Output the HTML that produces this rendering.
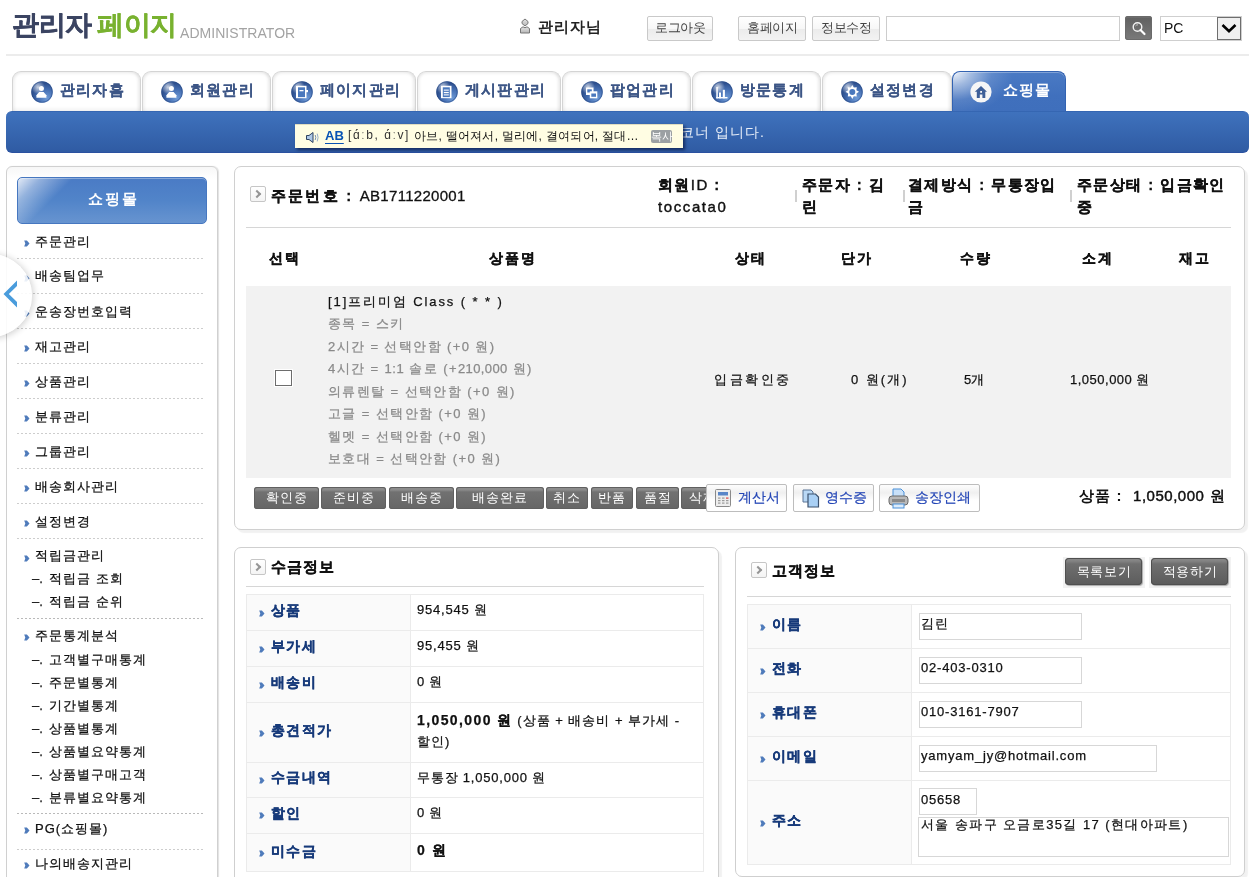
<!DOCTYPE html>
<html><head><meta charset="utf-8">
<style>
*{box-sizing:border-box;margin:0;padding:0}
html,body{width:1253px;height:877px;overflow:hidden;background:#fff}
body{position:relative;font-family:"Liberation Sans",sans-serif;font-size:13px;color:#222}
.abs{position:absolute}
/* header */
#logo1{left:12px;top:7px;font-size:27px;font-weight:bold;color:#3b4462;-webkit-text-stroke:0.4px #3b4462;letter-spacing:-0.5px;white-space:nowrap}
#logo2{left:97px;top:7px;font-size:27px;font-weight:bold;color:#79b230;-webkit-text-stroke:0.3px #79b230;letter-spacing:-0.5px;white-space:nowrap}
#logo3{left:180px;top:25px;font-size:14px;color:#a3a3a3;white-space:nowrap;letter-spacing:0.05px}
#hline{left:6px;top:54px;width:1243px;height:2px;background:#ececec}
.hbtn{position:absolute;top:16px;height:25px;border:1px solid #c9c9c9;border-radius:2px;background:linear-gradient(#fff 0,#f7f7f7 50%,#ebebeb 51%,#f3f3f3 100%);font-size:13px;color:#444;text-align:center;line-height:22px;letter-spacing:-0.5px}
/* tabs */
.tab{position:absolute;top:71px;height:40px;border:1px solid #d4d4d4;border-bottom:none;border-radius:9px 9px 0 0;background:#fff;box-shadow:inset 0 3px 3px -1px rgba(0,0,0,.05),inset -3px 0 3px -1px rgba(0,0,0,.08),inset 3px 0 3px -1px rgba(0,0,0,.05),inset 0 -5px 4px -3px rgba(0,0,0,.06)}
.tab .ic2{position:absolute;left:18px;top:9px}
.tab .icx{position:absolute;left:18px;top:9px;width:22px;height:22px;border-radius:50%;background:radial-gradient(circle at 35% 30%,#c6d6ee 0,#6d93c9 25%,#3a63a6 60%,#2c4f8c 100%)}
.tab .tx{position:absolute;left:47px;top:9px;font-size:15px;font-weight:bold;color:#3d5686;-webkit-text-stroke:0.15px #3d5686;white-space:nowrap;letter-spacing:1.2px}
#bluebar{left:6px;top:111px;width:1243px;height:42px;border-radius:6px;background:linear-gradient(#3f72bd,#2f5ba3);border-top:1px solid #3566b2;border-bottom:1px solid #2a51a0}
/* boxes */
.box{position:absolute;border:1px solid #cfcfcf;border-radius:7px;background:#fff;box-shadow:3px 3px 1px rgba(0,0,0,.055)}
.sideitem{position:absolute;left:17px;width:188px;font-size:13px;color:#111;white-space:nowrap;letter-spacing:1px;margin-left:-1px}
.dash{position:absolute;left:17px;width:188px;height:1px;background:repeating-linear-gradient(90deg,#cdcdcd 0 2px,transparent 2px 4px)}
.bul{position:absolute;width:5px;height:6px}
.ibox{width:16px;height:16px;border:1px solid #c6c6c6;border-radius:2px;background:linear-gradient(#fff,#f4f4f4)}
.ibox:after{content:"";position:absolute;left:3px;top:4px;width:4px;height:4px;border-right:2.2px solid #959595;border-top:2.2px solid #959595;transform:rotate(45deg)}
.hd2{font-size:15px;font-weight:bold;color:#111;line-height:22px;letter-spacing:1.4px;white-space:nowrap;margin-left:-1px}
.sep{width:2px;height:12px;background:#d0d0d0}
.th1{top:249px;font-size:14px;font-weight:bold;color:#111;text-align:center;line-height:18px;letter-spacing:2px;text-indent:2px}
.td1{font-size:13px;color:#111;white-space:nowrap;line-height:16px;letter-spacing:1.5px}
.dbtn{position:absolute;top:487px;height:22px;border-radius:3px;background:linear-gradient(#8f8f8f 0,#8a8a8a 3px,#717171 5px,#666 100%);box-shadow:inset 0 0 0 1px #606060;color:#fff;font-size:13px;text-align:center;line-height:22px;letter-spacing:1px;white-space:nowrap}
.lbtn{position:absolute;top:484px;height:28px;border:1px solid #bdbdbd;border-radius:2px;background:linear-gradient(#fdfdfd,#f0f0f0 30%,#fff 60%,#fff);white-space:nowrap}
.lbtn span{position:absolute;top:4px;font-size:13.5px;color:#2446b6;-webkit-text-stroke:0.2px #2446b6}
.thb{font-size:14px;font-weight:bold;color:#173a7a;white-space:nowrap;line-height:18px;letter-spacing:1.3px}
.tdv{font-size:13px;color:#111;white-space:nowrap;line-height:16px;letter-spacing:0.8px}
.gbtn{position:absolute;top:558px;width:77px;height:27px;border-radius:4px;background:linear-gradient(#8a8a8a 0,#838383 3px,#6f6f6f 6px,#5c5c5c 100%);box-shadow:inset 0 0 0 1px #505050,1px 1px 1px rgba(0,0,0,.3);color:#fff;font-size:13px;text-align:center;line-height:27px;letter-spacing:0.6px;text-indent:1px}
.inp{position:absolute;height:27px;border:1px solid #d7d7d7;background:#fff;font-size:13px;color:#111;padding:1px 0 0 1px;white-space:nowrap;line-height:17px;letter-spacing:0.8px}
body{will-change:transform}
.sideitem,.td1,.tdv,.inp,.prod{-webkit-text-stroke:0.25px currentColor}
.hd2,.th1,.thb,.ttl{-webkit-text-stroke:0.3px currentColor}</style></head><body>
<!-- HEADER -->
<div id="logo1" class="abs">관리자</div>
<div id="logo2" class="abs">페이지</div>
<div id="logo3" class="abs">ADMINISTRATOR</div>
<div id="hline" class="abs"></div>
<!-- user icon -->
<svg class="abs" style="left:519px;top:18px" width="12" height="16" viewBox="0 0 12 16">
 <defs><linearGradient id="ug" x1="0" y1="0" x2="0" y2="1"><stop offset="0" stop-color="#e6e6e6"/><stop offset="1" stop-color="#b5b5b5"/></linearGradient></defs>
 <path d="M6 1 L9 3.5 L9 5.5 L6 8 L3 5.5 L3 3.5 Z" fill="url(#ug)" stroke="#777" stroke-width="1"/>
 <path d="M1.5 15 L1.5 10.5 L4 8.8 L6 9.8 L8 8.8 L10.5 10.5 L10.5 15 Z" fill="url(#ug)" stroke="#777" stroke-width="1"/>
</svg>
<div class="abs" id="admname" style="left:538px;top:18px;font-size:15px;font-weight:bold;color:#222;letter-spacing:1px;white-space:nowrap">관리자님</div>
<div class="hbtn" style="left:647px;width:66px">로그아웃</div>
<div class="hbtn" style="left:738px;width:68px">홈페이지</div>
<div class="hbtn" style="left:812px;width:68px">정보수정</div>
<div class="abs" style="left:886px;top:16px;width:234px;height:25px;border:1px solid #cdcdcd;background:#fff"></div>
<div class="abs" style="left:1125px;top:16px;width:27px;height:24px;border-radius:3px;background:linear-gradient(#5f5f5f,#7a7a7a);box-shadow:inset 0 0 0 1px #6a6a6a, inset 0 2px 1px rgba(255,255,255,.08)">
 <svg width="27" height="24" viewBox="0 0 27 24" style="position:absolute;left:0;top:0"><circle cx="12.5" cy="11" r="4.3" fill="none" stroke="#f2f2f2" stroke-width="1.4"/><path d="M15.5 14 L19.5 18" stroke="#fff" stroke-width="2.2" stroke-linecap="round"/><path d="M10.5 10 Q11.5 8.6 13 8.8" stroke="#ddd" stroke-width="0.8" fill="none"/></svg>
</div>
<div class="abs" style="left:1160px;top:16px;width:82px;height:25px;border:1px solid #cfcfcf;background:#fff">
 <div class="abs" style="left:3px;top:3px;font-size:14px;color:#111">PC</div>
 <div class="abs" style="left:56px;top:0px;width:24px;height:23px;border:1px solid #6e6e6e;background:#efefef">
  <svg width="22" height="21" viewBox="0 0 22 21" style="position:absolute;left:0;top:0"><path d="M4.5 7 L11 13.2 L17.5 7" fill="none" stroke="#000" stroke-width="2.6"/></svg>
 </div>
</div>
<svg width="0" height="0" style="position:absolute"><defs>
<radialGradient id="sph" cx="0.72" cy="0.78" r="0.85"><stop offset="0" stop-color="#6e9ad6"/><stop offset="0.45" stop-color="#4670b4"/><stop offset="0.8" stop-color="#2f5190"/><stop offset="1" stop-color="#3b5f9e"/></radialGradient>
<radialGradient id="hl" cx="0.32" cy="0.28" r="0.32"><stop offset="0" stop-color="#fff" stop-opacity=".75"/><stop offset="1" stop-color="#fff" stop-opacity="0"/></radialGradient>
</defs></svg>
<!-- TABS -->
<div class="tab" style="left:12px;width:129px"><svg class="ic2" width="22" height="22" viewBox="0 0 22 22"><circle cx="11" cy="11" r="10.8" fill="url(#sph)"/><circle cx="11" cy="11" r="10.8" fill="url(#hl)"/><circle cx="11" cy="11" r="10.3" fill="none" stroke="#24437a" stroke-opacity=".45" stroke-width="1"/><circle cx="10.4" cy="7.6" r="2.5" fill="#fff"/><path d="M8.2 11 L12.6 11 L15.4 14.2 L15.4 16.8 L5.4 16.8 L5.4 14.2 Z" fill="#fff"/></svg><div class="tx">관리자홈</div></div>
<div class="tab" style="left:142px;width:129px"><svg class="ic2" width="22" height="22" viewBox="0 0 22 22"><circle cx="11" cy="11" r="10.8" fill="url(#sph)"/><circle cx="11" cy="11" r="10.8" fill="url(#hl)"/><circle cx="11" cy="11" r="10.3" fill="none" stroke="#24437a" stroke-opacity=".45" stroke-width="1"/><circle cx="10.4" cy="7.6" r="2.5" fill="#fff"/><path d="M8.2 11 L12.6 11 L15.4 14.2 L15.4 16.8 L5.4 16.8 L5.4 14.2 Z" fill="#fff"/></svg><div class="tx">회원관리</div></div>
<div class="tab" style="left:272px;width:144px"><svg class="ic2" width="22" height="22" viewBox="0 0 22 22"><circle cx="11" cy="11" r="10.8" fill="url(#sph)"/><circle cx="11" cy="11" r="10.8" fill="url(#hl)"/><circle cx="11" cy="11" r="10.3" fill="none" stroke="#24437a" stroke-opacity=".45" stroke-width="1"/><rect x="5" y="4.8" width="10.5" height="12.4" fill="#fff"/><rect x="7" y="6.3" width="7" height="9.8" fill="#4a78bd"/><rect x="8.5" y="9" width="4" height="1.3" fill="#fff"/><rect x="15" y="9" width="2" height="2.2" fill="#fff"/></svg><div class="tx">페이지관리</div></div>
<div class="tab" style="left:417px;width:144px"><svg class="ic2" width="22" height="22" viewBox="0 0 22 22"><circle cx="11" cy="11" r="10.8" fill="url(#sph)"/><circle cx="11" cy="11" r="10.8" fill="url(#hl)"/><circle cx="11" cy="11" r="10.3" fill="none" stroke="#24437a" stroke-opacity=".45" stroke-width="1"/><rect x="5" y="4.8" width="10.5" height="12.4" fill="#fff"/><rect x="6.8" y="6.3" width="7" height="9.8" fill="#4a78bd"/><rect x="7.8" y="8.5" width="5" height="1.3" fill="#dfe8f5"/><rect x="7.8" y="10.9" width="5" height="1.3" fill="#fff"/><rect x="7.8" y="13.2" width="5" height="1.3" fill="#dfe8f5"/></svg><div class="tx">게시판관리</div></div>
<div class="tab" style="left:562px;width:129px"><svg class="ic2" width="22" height="22" viewBox="0 0 22 22"><circle cx="11" cy="11" r="10.8" fill="url(#sph)"/><circle cx="11" cy="11" r="10.8" fill="url(#hl)"/><circle cx="11" cy="11" r="10.3" fill="none" stroke="#24437a" stroke-opacity=".45" stroke-width="1"/><rect x="5" y="6.5" width="7.5" height="7.5" fill="#fff"/><rect x="6.3" y="8.3" width="4.5" height="3.2" fill="#4a78bd"/><rect x="8.8" y="10.3" width="7.5" height="7" fill="#fff"/><rect x="10.3" y="12.5" width="4.7" height="3.3" fill="#4a78bd"/></svg><div class="tx">팝업관리</div></div>
<div class="tab" style="left:692px;width:129px"><svg class="ic2" width="22" height="22" viewBox="0 0 22 22"><circle cx="11" cy="11" r="10.8" fill="url(#sph)"/><circle cx="11" cy="11" r="10.8" fill="url(#hl)"/><circle cx="11" cy="11" r="10.3" fill="none" stroke="#24437a" stroke-opacity=".45" stroke-width="1"/><rect x="5.3" y="6" width="1.5" height="11.3" fill="#fff"/><rect x="8" y="11.5" width="2" height="5.8" fill="#fff"/><rect x="11.8" y="8.8" width="2.1" height="8.5" fill="#fff"/><rect x="5.3" y="16" width="11.2" height="1.4" fill="#fff"/></svg><div class="tx">방문통계</div></div>
<div class="tab" style="left:822px;width:130px"><svg class="ic2" width="22" height="22" viewBox="0 0 22 22"><circle cx="11" cy="11" r="10.8" fill="url(#sph)"/><circle cx="11" cy="11" r="10.8" fill="url(#hl)"/><circle cx="11" cy="11" r="10.3" fill="none" stroke="#24437a" stroke-opacity=".45" stroke-width="1"/><path d="M11.3 4 L12.8 6.6 L15.8 6.2 L15.4 9.2 L18 10.8 L15.4 12.6 L15.8 15.6 L12.8 15.2 L11.3 17.9 L9.8 15.2 L6.8 15.6 L7.2 12.6 L4.6 10.8 L7.2 9.2 L6.8 6.2 L9.8 6.6 Z" fill="#fff"/><circle cx="11.3" cy="10.9" r="3" fill="#4a78bd"/></svg><div class="tx">설정변경</div></div>
<div class="abs" id="acttab" style="left:952px;top:71px;width:114px;height:41px;border-radius:8px 8px 0 0;background:radial-gradient(ellipse 60px 44px at 0 0,rgba(255,255,255,.92) 0,rgba(255,255,255,.5) 30%,rgba(255,255,255,.12) 65%,rgba(255,255,255,0) 100%),linear-gradient(#4a7ac4,#4070bd 60%,#3f6fbc);border:1px solid #3363b2;border-bottom:none;box-shadow:inset 0 1px 0 rgba(255,255,255,.3)">
 <svg class="abs" style="left:17px;top:9px" width="22" height="22" viewBox="0 0 22 22"><circle cx="11" cy="11" r="10.6" fill="#f6f6f6"/><path d="M11 5 L17 10.8 L15.3 10.8 L15.3 17 L12.4 17 L12.4 13.5 L9.8 13.5 L9.8 17 L6.8 17 L6.8 10.8 L4.8 10.8 Z" fill="#3e5f98"/><rect x="10.2" y="10" width="1.8" height="1.8" fill="#f6f6f6"/></svg>
 <div class="abs" style="left:50px;top:9px;font-size:15px;font-weight:bold;color:#fff;white-space:nowrap;letter-spacing:1px">쇼핑몰</div>
</div>
<div id="bluebar" class="abs"></div>
<div class="abs" style="left:680px;top:124px;font-size:14px;color:#eaf0f9;white-space:nowrap;letter-spacing:1px">코너 입니다.</div>
<!-- tooltip -->
<div class="abs" id="tip" style="left:295px;top:124px;width:388px;height:24px;background:#fffde3;box-shadow:2px 2px 3px rgba(0,10,50,.6);border-top:1px solid #e0ddc0">
 <svg class="abs" style="left:11px;top:7px" width="14" height="11" viewBox="0 0 14 11"><path d="M0.5 3.5 L3 3.5 L7 0.5 L7 10.5 L3 7.5 L0.5 7.5 Z" fill="#aec8e8" stroke="#2e4260" stroke-width="1"/><path d="M9.2 3 Q10.4 5.5 9.2 8" fill="none" stroke="#6a86b0" stroke-width="0.9"/><path d="M11.2 1.6 Q13 5.5 11.2 9.4" fill="none" stroke="#8aa4c8" stroke-width="0.9"/></svg>
 <div class="abs" style="left:30px;top:3px;font-size:13px;font-weight:bold;color:#0752b4;text-decoration:underline;text-underline-offset:3px;white-space:nowrap">AB</div>
 <div class="abs" style="left:53px;top:3px;font-size:12px;color:#333;white-space:nowrap;letter-spacing:1.6px">[ɑ́ːb, ɑ́ːv]</div>
 <div class="abs" style="left:119px;top:3px;font-size:12px;color:#111;white-space:nowrap;letter-spacing:0.25px">아브, 떨어져서, 멀리에, 결여되어, 절대…</div>
 <div class="abs" style="left:356px;top:5px;width:21px;height:13px;border-radius:2px;background:#9ba0a3;color:#fff;font-size:11px;line-height:13px;text-align:center;letter-spacing:-0.5px">복사</div>
</div>
<!-- SIDEBAR -->
<div class="box" style="left:6px;top:166px;width:212px;height:730px;border-radius:6px;border-color:#d0d0d0;box-shadow:1px 0 1px rgba(0,0,0,.12);background:linear-gradient(#f7f7f7,#fff 12px)"></div>
<div class="abs" style="left:17px;top:177px;width:190px;height:47px;border-radius:5px;border:1px solid #4677c0;background:linear-gradient(135deg,rgba(255,255,255,.85) 0,rgba(255,255,255,.4) 10%,rgba(255,255,255,0) 24%),linear-gradient(#4a7bc5 0,#5184c9 50%,#6794d0 100%);box-shadow:inset 0 1px 0 rgba(255,255,255,.35)">
 <div class="abs" style="left:0;top:12px;width:188px;text-align:center;font-size:15px;font-weight:bold;color:#fff;letter-spacing:2px;text-indent:2px">쇼핑몰</div>
</div>
<svg class="abs" style="left:24px;top:240px" width="6" height="7" viewBox="0 0 6 7"><path d="M0.2 0.4 L2.9 0.4 L5.5 3.5 L2.9 6.6 L0.2 6.6 L1.3 3.5 Z" fill="#4f7bbb"/></svg>
<div class="sideitem" style="left:36px;top:234px;line-height:16px">주문관리</div>
<svg class="abs" style="left:24px;top:275px" width="6" height="7" viewBox="0 0 6 7"><path d="M0.2 0.4 L2.9 0.4 L5.5 3.5 L2.9 6.6 L0.2 6.6 L1.3 3.5 Z" fill="#4f7bbb"/></svg>
<div class="sideitem" style="left:36px;top:268px;line-height:16px">배송팀업무</div>
<svg class="abs" style="left:24px;top:310px" width="6" height="7" viewBox="0 0 6 7"><path d="M0.2 0.4 L2.9 0.4 L5.5 3.5 L2.9 6.6 L0.2 6.6 L1.3 3.5 Z" fill="#4f7bbb"/></svg>
<div class="sideitem" style="left:36px;top:304px;line-height:16px">운송장번호입력</div>
<svg class="abs" style="left:24px;top:345px" width="6" height="7" viewBox="0 0 6 7"><path d="M0.2 0.4 L2.9 0.4 L5.5 3.5 L2.9 6.6 L0.2 6.6 L1.3 3.5 Z" fill="#4f7bbb"/></svg>
<div class="sideitem" style="left:36px;top:339px;line-height:16px">재고관리</div>
<svg class="abs" style="left:24px;top:380px" width="6" height="7" viewBox="0 0 6 7"><path d="M0.2 0.4 L2.9 0.4 L5.5 3.5 L2.9 6.6 L0.2 6.6 L1.3 3.5 Z" fill="#4f7bbb"/></svg>
<div class="sideitem" style="left:36px;top:374px;line-height:16px">상품관리</div>
<svg class="abs" style="left:24px;top:415px" width="6" height="7" viewBox="0 0 6 7"><path d="M0.2 0.4 L2.9 0.4 L5.5 3.5 L2.9 6.6 L0.2 6.6 L1.3 3.5 Z" fill="#4f7bbb"/></svg>
<div class="sideitem" style="left:36px;top:409px;line-height:16px">분류관리</div>
<svg class="abs" style="left:24px;top:450px" width="6" height="7" viewBox="0 0 6 7"><path d="M0.2 0.4 L2.9 0.4 L5.5 3.5 L2.9 6.6 L0.2 6.6 L1.3 3.5 Z" fill="#4f7bbb"/></svg>
<div class="sideitem" style="left:36px;top:444px;line-height:16px">그룹관리</div>
<svg class="abs" style="left:24px;top:485px" width="6" height="7" viewBox="0 0 6 7"><path d="M0.2 0.4 L2.9 0.4 L5.5 3.5 L2.9 6.6 L0.2 6.6 L1.3 3.5 Z" fill="#4f7bbb"/></svg>
<div class="sideitem" style="left:36px;top:479px;line-height:16px">배송회사관리</div>
<svg class="abs" style="left:24px;top:520px" width="6" height="7" viewBox="0 0 6 7"><path d="M0.2 0.4 L2.9 0.4 L5.5 3.5 L2.9 6.6 L0.2 6.6 L1.3 3.5 Z" fill="#4f7bbb"/></svg>
<div class="sideitem" style="left:36px;top:514px;line-height:16px">설정변경</div>
<svg class="abs" style="left:24px;top:555px" width="6" height="7" viewBox="0 0 6 7"><path d="M0.2 0.4 L2.9 0.4 L5.5 3.5 L2.9 6.6 L0.2 6.6 L1.3 3.5 Z" fill="#4f7bbb"/></svg>
<div class="sideitem" style="left:36px;top:548px;line-height:16px">적립금관리</div>
<svg class="abs" style="left:24px;top:634px" width="6" height="7" viewBox="0 0 6 7"><path d="M0.2 0.4 L2.9 0.4 L5.5 3.5 L2.9 6.6 L0.2 6.6 L1.3 3.5 Z" fill="#4f7bbb"/></svg>
<div class="sideitem" style="left:36px;top:628px;line-height:16px">주문통계분석</div>
<svg class="abs" style="left:24px;top:827px" width="6" height="7" viewBox="0 0 6 7"><path d="M0.2 0.4 L2.9 0.4 L5.5 3.5 L2.9 6.6 L0.2 6.6 L1.3 3.5 Z" fill="#4f7bbb"/></svg>
<div class="sideitem" style="left:36px;top:821px;line-height:16px">PG(쇼핑몰)</div>
<svg class="abs" style="left:24px;top:862px" width="6" height="7" viewBox="0 0 6 7"><path d="M0.2 0.4 L2.9 0.4 L5.5 3.5 L2.9 6.6 L0.2 6.6 L1.3 3.5 Z" fill="#4f7bbb"/></svg>
<div class="sideitem" style="left:36px;top:856px;line-height:16px">나의배송지관리</div>
<div class="sideitem" style="left:33px;top:571px;line-height:16px"><span style="letter-spacing:0;margin-right:2px">&ndash;.</span>&nbsp;적립금 조회</div>
<div class="sideitem" style="left:33px;top:594px;line-height:16px"><span style="letter-spacing:0;margin-right:2px">&ndash;.</span>&nbsp;적립금 순위</div>
<div class="sideitem" style="left:33px;top:652px;line-height:16px"><span style="letter-spacing:0;margin-right:2px">&ndash;.</span>&nbsp;고객별구매통계</div>
<div class="sideitem" style="left:33px;top:675px;line-height:16px"><span style="letter-spacing:0;margin-right:2px">&ndash;.</span>&nbsp;주문별통계</div>
<div class="sideitem" style="left:33px;top:698px;line-height:16px"><span style="letter-spacing:0;margin-right:2px">&ndash;.</span>&nbsp;기간별통계</div>
<div class="sideitem" style="left:33px;top:721px;line-height:16px"><span style="letter-spacing:0;margin-right:2px">&ndash;.</span>&nbsp;상품별통계</div>
<div class="sideitem" style="left:33px;top:744px;line-height:16px"><span style="letter-spacing:0;margin-right:2px">&ndash;.</span>&nbsp;상품별요약통계</div>
<div class="sideitem" style="left:33px;top:767px;line-height:16px"><span style="letter-spacing:0;margin-right:2px">&ndash;.</span>&nbsp;상품별구매고객</div>
<div class="sideitem" style="left:33px;top:790px;line-height:16px"><span style="letter-spacing:0;margin-right:2px">&ndash;.</span>&nbsp;분류별요약통계</div>
<div class="dash" style="top:258px"></div>
<div class="dash" style="top:293px"></div>
<div class="dash" style="top:328px"></div>
<div class="dash" style="top:363px"></div>
<div class="dash" style="top:398px"></div>
<div class="dash" style="top:433px"></div>
<div class="dash" style="top:468px"></div>
<div class="dash" style="top:503px"></div>
<div class="dash" style="top:538px"></div>
<div class="dash" style="top:618px;background:repeating-linear-gradient(90deg,#b9b9b9 0 2px,transparent 2px 4px)"></div>
<div class="dash" style="top:813px;background:repeating-linear-gradient(90deg,#b9b9b9 0 2px,transparent 2px 4px)"></div>
<div class="dash" style="top:849px"></div>
<div class="abs" style="left:-51px;top:254px;width:83px;height:83px;border-radius:50%;background:rgba(255,255,255,.88);box-shadow:1px 1px 6px 1px rgba(0,0,0,.17)"></div>
<svg class="abs" style="left:2px;top:279px" width="18" height="30" viewBox="0 0 18 30"><path d="M15 1.5 L15 7 L6.8 15 L15 23 L15 28.5 L1.5 15 Z" fill="#4a9cdc"/></svg>
<!-- MAIN PANEL -->
<div class="box" style="left:234px;top:166px;width:1011px;height:364px;border-color:#d0d0d0"></div>
<div class="abs ibox" style="left:250px;top:186px"></div>
<div class="abs ttl" style="left:271px;top:186px;font-size:15px;font-weight:bold;color:#111;letter-spacing:2.2px;white-space:nowrap;line-height:20px">주문번호 : <span style="font-weight:normal;-webkit-text-stroke:0.3px #111;letter-spacing:0.3px">AB1711220001</span></div>
<div class="abs hd2" style="left:659px;top:174px;width:132px">회원<span style="font-weight:normal;-webkit-text-stroke:0.4px #111">ID</span> :<br><span style="font-weight:normal;-webkit-text-stroke:0.4px #111;letter-spacing:1.6px">toccata0</span></div>
<div class="abs sep" style="left:795px;top:190px"></div>
<div class="abs hd2" style="left:803px;top:174px;width:95px">주문자 : 김<br>린</div>
<div class="abs sep" style="left:903px;top:190px"></div>
<div class="abs hd2" style="left:909px;top:174px;width:155px">결제방식 : 무통장입<br>금</div>
<div class="abs sep" style="left:1070px;top:190px"></div>
<div class="abs hd2" style="left:1078px;top:174px;width:160px">주문상태 : 입금확인<br>중</div>
<div class="abs" style="left:246px;top:227px;width:985px;height:1px;background:#d6d6d6"></div>
<div class="abs th1" style="left:246px;width:76px">선택</div>
<div class="abs th1" style="left:322px;width:379px">상품명</div>
<div class="abs th1" style="left:701px;width:98px">상태</div>
<div class="abs th1" style="left:799px;width:114px">단가</div>
<div class="abs th1" style="left:913px;width:124px">수량</div>
<div class="abs th1" style="left:1037px;width:120px">소계</div>
<div class="abs th1" style="left:1157px;width:74px">재고</div>
<div class="abs" style="left:246px;top:286px;width:985px;height:192px;background:#f2f2f2"></div>
<div class="abs" style="left:274px;top:369px;width:19px;height:18px;border:1px solid #fff;background:#fff"><div style="width:17px;height:16px;border:1px solid #6d6d6d;background:#fff"></div></div>
<div class="abs prod" style="left:328px;top:291px;font-size:13px;line-height:22.45px;color:#8a8a8a;white-space:nowrap;letter-spacing:1.4px"><span style="color:#111;letter-spacing:1.9px">[1]프리미엄 Class ( * * )</span><br>종목 = 스키<br>2시간 = 선택안함 (+0 원)<br>4시간 = <span style="letter-spacing:0.6px">1:1</span> 솔로 (+<span style="letter-spacing:0.4px">210,000</span> 원)<br>의류렌탈 = 선택안함 (+0 원)<br>고글 = 선택안함 (+0 원)<br>헬멧 = 선택안함 (+0 원)<br>보호대 = 선택안함 (+0 원)</div>
<div class="abs td1" style="left:714px;top:372px;letter-spacing:2.5px">입금확인중</div>
<div class="abs td1" style="left:851px;top:372px;letter-spacing:2px">0 원(개)</div>
<div class="abs td1" style="left:964px;top:372px;letter-spacing:0">5개</div>
<div class="abs td1" style="left:1070px;top:372px;letter-spacing:0.5px">1,050,000 원</div>
<div class="dbtn" style="left:254px;width:65px">확인중</div>
<div class="dbtn" style="left:321px;width:65px">준비중</div>
<div class="dbtn" style="left:389px;width:65px">배송중</div>
<div class="dbtn" style="left:456px;width:88px">배송완료</div>
<div class="dbtn" style="left:546px;width:42px">취소</div>
<div class="dbtn" style="left:591px;width:42px">반품</div>
<div class="dbtn" style="left:636px;width:43px">품절</div>
<div class="dbtn" style="left:681px;width:43px">삭제</div>
<div class="lbtn" style="left:706px;width:81px"><svg class="abs" style="left:8px;top:4px" width="16" height="18" viewBox="0 0 16 18"><rect x="0.5" y="0.5" width="15" height="17" rx="1" fill="#eee" stroke="#8a8a8a"/><rect x="3" y="3" width="10" height="3.5" fill="#5a86c8"/><g fill="#9a9a9a"><rect x="3" y="8.5" width="2.5" height="1.2"/><rect x="7" y="8.5" width="2.5" height="1.2"/><rect x="3" y="11" width="2.5" height="1.2"/><rect x="7" y="11" width="2.5" height="1.2"/><rect x="11" y="11" width="2.5" height="1.2"/><rect x="3" y="13.5" width="2.5" height="1.2"/><rect x="7" y="13.5" width="2.5" height="1.2"/><rect x="11" y="13.5" width="2.5" height="1.2"/></g><rect x="11" y="8.5" width="2.5" height="1.2" fill="#e04040"/></svg><span style="left:31px">계산서</span></div>
<div class="lbtn" style="left:793px;width:81px"><svg class="abs" style="left:8px;top:4px" width="18" height="19" viewBox="0 0 18 19"><path d="M1 1 L9 1 L11 3 L11 13 L1 13 Z" fill="#b9d8f5" stroke="#5a7596" stroke-width="1"/><path d="M6 5 L13.5 5 L16.5 8 L16.5 18 L6 18 Z" fill="#a9d0f5" stroke="#3c526e" stroke-width="1.2"/></svg><span style="left:31px">영수증</span></div>
<div class="lbtn" style="left:879px;width:101px"><svg class="abs" style="left:8px;top:3px" width="21" height="21" viewBox="0 0 21 21"><path d="M5 1 L13 1 L16 4 L16 9 L5 9 Z" fill="#c8e0f8" stroke="#4a90d8" stroke-width="1"/><rect x="1" y="8" width="19" height="9" rx="3" fill="#b8b8b8" stroke="#6a6a6a"/><rect x="4" y="11" width="13" height="3" fill="#8a8a8a"/><rect x="5" y="16" width="11" height="4" fill="#dcecfb" stroke="#4a90d8" stroke-width="1"/></svg><span style="left:35px">송장인쇄</span></div>
<div class="abs" style="left:1079px;top:487px;font-size:15px;font-weight:bold;color:#111;white-space:nowrap;letter-spacing:1.1px">상품 :&nbsp; <span style="font-weight:normal;-webkit-text-stroke:0.45px #111;letter-spacing:0.5px">1,050,000</span> 원</div>
<!-- PAYMENT PANEL -->
<div class="box" style="left:234px;top:547px;width:485px;height:360px"></div>
<div class="abs ibox" style="left:250px;top:559px"></div>
<div class="abs ttl" style="left:271px;top:557px;font-size:15px;font-weight:bold;color:#111;letter-spacing:1px;white-space:nowrap;line-height:20px">수금정보</div>
<div class="abs" style="left:246px;top:586px;width:458px;height:1px;background:#d6d6d6"></div>
<div class="abs" style="left:246px;top:594px;width:458px;height:278px;border:1px solid #ebebeb;background:#fff"></div>
<div class="abs" style="left:247px;top:595px;width:164px;height:276px;background:#fafafa;border-right:1px solid #ebebeb"></div>
<svg class="abs" style="left:259px;top:610px" width="6" height="7" viewBox="0 0 6 7"><path d="M0.2 0.4 L2.9 0.4 L5.5 3.5 L2.9 6.6 L0.2 6.6 L1.3 3.5 Z" fill="#4f7bbb"/></svg>
<div class="abs thb" style="left:271px;top:601px">상품</div>
<div class="abs tdv" style="left:417px;top:602px">954,545 원</div>
<div class="abs" style="left:247px;top:630px;width:456px;height:1px;background:#ebebeb"></div>
<svg class="abs" style="left:259px;top:646px" width="6" height="7" viewBox="0 0 6 7"><path d="M0.2 0.4 L2.9 0.4 L5.5 3.5 L2.9 6.6 L0.2 6.6 L1.3 3.5 Z" fill="#4f7bbb"/></svg>
<div class="abs thb" style="left:271px;top:637px">부가세</div>
<div class="abs tdv" style="left:417px;top:638px">95,455 원</div>
<div class="abs" style="left:247px;top:666px;width:456px;height:1px;background:#ebebeb"></div>
<svg class="abs" style="left:259px;top:682px" width="6" height="7" viewBox="0 0 6 7"><path d="M0.2 0.4 L2.9 0.4 L5.5 3.5 L2.9 6.6 L0.2 6.6 L1.3 3.5 Z" fill="#4f7bbb"/></svg>
<div class="abs thb" style="left:271px;top:673px">배송비</div>
<div class="abs tdv" style="left:417px;top:674px">0 원</div>
<div class="abs" style="left:247px;top:702px;width:456px;height:1px;background:#ebebeb"></div>
<svg class="abs" style="left:259px;top:730px" width="6" height="7" viewBox="0 0 6 7"><path d="M0.2 0.4 L2.9 0.4 L5.5 3.5 L2.9 6.6 L0.2 6.6 L1.3 3.5 Z" fill="#4f7bbb"/></svg>
<div class="abs thb" style="left:271px;top:721px">총견적가</div>
<div class="abs" style="left:247px;top:762px;width:456px;height:1px;background:#ebebeb"></div>
<svg class="abs" style="left:259px;top:777px" width="6" height="7" viewBox="0 0 6 7"><path d="M0.2 0.4 L2.9 0.4 L5.5 3.5 L2.9 6.6 L0.2 6.6 L1.3 3.5 Z" fill="#4f7bbb"/></svg>
<div class="abs thb" style="left:271px;top:768px">수금내역</div>
<div class="abs tdv" style="left:417px;top:770px">무통장 1,050,000 원</div>
<div class="abs" style="left:247px;top:797px;width:456px;height:1px;background:#ebebeb"></div>
<svg class="abs" style="left:259px;top:812px" width="6" height="7" viewBox="0 0 6 7"><path d="M0.2 0.4 L2.9 0.4 L5.5 3.5 L2.9 6.6 L0.2 6.6 L1.3 3.5 Z" fill="#4f7bbb"/></svg>
<div class="abs thb" style="left:271px;top:804px">할인</div>
<div class="abs tdv" style="left:417px;top:805px">0 원</div>
<div class="abs" style="left:247px;top:833px;width:456px;height:1px;background:#ebebeb"></div>
<svg class="abs" style="left:259px;top:850px" width="6" height="7" viewBox="0 0 6 7"><path d="M0.2 0.4 L2.9 0.4 L5.5 3.5 L2.9 6.6 L0.2 6.6 L1.3 3.5 Z" fill="#4f7bbb"/></svg>
<div class="abs thb" style="left:271px;top:842px">미수금</div>
<div class="abs tdv" style="left:417px;top:842px"><b style='font-size:14px;letter-spacing:1.5px'>0 원</b></div>
<div class="abs tdv" style="left:417px;top:710px;line-height:21px;width:285px;letter-spacing:1.0px"><b style="font-size:14px;letter-spacing:1.4px">1,050,000 원</b> (상품 + 배송비 + 부가세 -<br>할인)</div>
<!-- CUSTOMER PANEL -->
<div class="box" style="left:735px;top:547px;width:510px;height:330px"></div>
<div class="abs ibox" style="left:751px;top:562px"></div>
<div class="abs ttl" style="left:772px;top:561px;font-size:15px;font-weight:bold;color:#111;letter-spacing:1px;white-space:nowrap;line-height:20px">고객정보</div>
<div class="abs" style="left:1063px;top:557px;width:82px;height:31px;background:#f2f2f2"></div>
<div class="abs" style="left:1149px;top:557px;width:82px;height:31px;background:#f2f2f2"></div>
<div class="gbtn" style="left:1065px">목록보기</div>
<div class="gbtn" style="left:1151px">적용하기</div>
<div class="abs" style="left:747px;top:596px;width:484px;height:1px;background:#d6d6d6"></div>
<div class="abs" style="left:747px;top:604px;width:484px;height:261px;border:1px solid #ebebeb;background:#fff"></div>
<div class="abs" style="left:748px;top:605px;width:164px;height:259px;background:#fafafa;border-right:1px solid #ebebeb"></div>
<svg class="abs" style="left:760px;top:624px" width="6" height="7" viewBox="0 0 6 7"><path d="M0.2 0.4 L2.9 0.4 L5.5 3.5 L2.9 6.6 L0.2 6.6 L1.3 3.5 Z" fill="#4f7bbb"/></svg>
<div class="abs thb" style="left:772px;top:615px">이름</div>
<div class="inp" style="left:919px;top:613px;width:163px">김린</div>
<div class="abs" style="left:748px;top:648px;width:482px;height:1px;background:#ebebeb"></div>
<svg class="abs" style="left:760px;top:668px" width="6" height="7" viewBox="0 0 6 7"><path d="M0.2 0.4 L2.9 0.4 L5.5 3.5 L2.9 6.6 L0.2 6.6 L1.3 3.5 Z" fill="#4f7bbb"/></svg>
<div class="abs thb" style="left:772px;top:659px">전화</div>
<div class="inp" style="left:919px;top:657px;width:163px">02-403-0310</div>
<div class="abs" style="left:748px;top:692px;width:482px;height:1px;background:#ebebeb"></div>
<svg class="abs" style="left:760px;top:712px" width="6" height="7" viewBox="0 0 6 7"><path d="M0.2 0.4 L2.9 0.4 L5.5 3.5 L2.9 6.6 L0.2 6.6 L1.3 3.5 Z" fill="#4f7bbb"/></svg>
<div class="abs thb" style="left:772px;top:703px">휴대폰</div>
<div class="inp" style="left:919px;top:701px;width:163px">010-3161-7907</div>
<div class="abs" style="left:748px;top:736px;width:482px;height:1px;background:#ebebeb"></div>
<svg class="abs" style="left:760px;top:756px" width="6" height="7" viewBox="0 0 6 7"><path d="M0.2 0.4 L2.9 0.4 L5.5 3.5 L2.9 6.6 L0.2 6.6 L1.3 3.5 Z" fill="#4f7bbb"/></svg>
<div class="abs thb" style="left:772px;top:747px">이메일</div>
<div class="inp" style="left:919px;top:745px;width:238px">yamyam_jy@hotmail.com</div>
<div class="abs" style="left:748px;top:780px;width:482px;height:1px;background:#ebebeb"></div>
<svg class="abs" style="left:760px;top:820px" width="6" height="7" viewBox="0 0 6 7"><path d="M0.2 0.4 L2.9 0.4 L5.5 3.5 L2.9 6.6 L0.2 6.6 L1.3 3.5 Z" fill="#4f7bbb"/></svg>
<div class="abs thb" style="left:772px;top:811px">주소</div>
<div class="inp" style="left:919px;top:788px;width:58px;padding-top:2px">05658</div>
<div class="inp" style="left:918px;top:817px;width:311px;height:40px;padding-top:0;padding-left:2px;letter-spacing:1.4px;line-height:14px">서울 송파구 오금로35길 17 (현대아파트)</div>
</body></html>
